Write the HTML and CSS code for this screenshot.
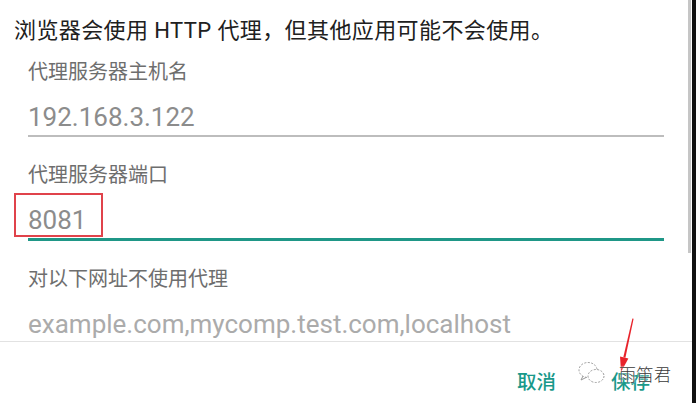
FILE: index.html
```html
<!DOCTYPE html>
<html lang="zh-CN">
<head>
<meta charset="utf-8">
<title>代理设置</title>
<link rel="stylesheet" href="styles.css">
</head>
<body>
<div class="screen">
  <div class="dialog">
    <div class="scroll">
      <p class="intro">浏览器会使用 HTTP 代理，但其他应用可能不会使用。</p>

      <div class="field">
        <div class="field-label">代理服务器主机名</div>
        <div class="field-value">192.168.3.122</div>
        <div class="field-line"></div>
      </div>

      <div class="field">
        <div class="field-label">代理服务器端口</div>
        <div class="field-value port">8081<span class="mark"></span></div>
        <div class="field-line focused"></div>
      </div>

      <div class="field">
        <div class="field-label">对以下网址不使用代理</div>
        <div class="field-value hint">example.com,mycomp.test.com,localhost</div>
      </div>

      <div class="scrollbar"></div>
    </div>

    <div class="actions">
      <span class="btn">取消</span>
      <span class="btn">保存</span>

      <svg class="arrow" width="24" height="60" viewBox="0 0 24 60">
        <polygon points="18.6,3.8 17.4,3.6 8.3,42.2 10.4,42.7" fill="#e8222a"/>
        <polygon points="13.4,43.4 5,41.4 6,57" fill="#e8222a"/>
      </svg>

      <div class="watermark">
        <svg class="wx" width="30" height="28" viewBox="0 0 30 28">
          <ellipse cx="11" cy="11" rx="9" ry="7.5" fill="none" stroke="#9a9a9a" stroke-width="1" stroke-dasharray="2 1.5"/>
          <ellipse cx="19" cy="17" rx="8" ry="6.5" fill="#fff" stroke="#9a9a9a" stroke-width="1" stroke-dasharray="2 1.5"/>
          <path d="M6 17 L4 21 L9 18.5" fill="none" stroke="#9a9a9a" stroke-width="1"/>
        </svg>
        <span class="wm-text">雨笛君</span>
      </div>
    </div>
  </div>
  <div class="edge"></div>
</div>
</body>
</html>
```

FILE: styles.css
```css
* { box-sizing: border-box; }

html, body {
  margin: 0;
  padding: 0;
  background: #fff;
}

body {
  font-family: Roboto, "Noto Sans CJK SC", sans-serif;
  width: 696px;
  height: 403px;
  overflow: hidden;
}

.screen {
  display: flex;
  height: 403px;
}

.dialog {
  flex: 1;
  display: flex;
  flex-direction: column;
  position: relative;
}

.edge {
  width: 4px;
  background: #111;
}

/* scrolling body of the dialog */
.scroll {
  position: relative;
  height: 342px;
  border-bottom: 1px solid #e2e2e2;
  padding: 17px 28px 0 14px;
}

.intro {
  margin: 0;
  font-size: 22px;
  line-height: 28px;
  color: #202020;
  letter-spacing: 0.4px;
}

.field {
  margin-left: 14px;
  margin-top: 15px;
}

.field + .field {
  margin-top: 26px;
}

.field-label {
  font-size: 20px;
  line-height: 24px;
  color: #6e6e6e;
}

.field-value {
  margin-top: 16px;
  font-size: 26px;
  line-height: 34px;
  color: #8c8c8c;
}

.field-value.hint {
  color: #ababab;
}

.port {
  position: relative;
}

/* red frame drawn around the port number */
.mark {
  position: absolute;
  left: -14px;
  top: -10px;
  width: 89px;
  height: 44px;
  border: 2px solid #e0434b;
}

.field-line {
  height: 2px;
  margin-top: 1px;
  background: #bdbdbd;
}

.field-line.focused {
  height: 3px;
  margin-top: 1px;
  background: #1f9787;
}

.scrollbar {
  position: absolute;
  right: 1px;
  top: 0;
  width: 3px;
  height: 253px;
  background: #c6c6c6;
}

.actions {
  position: relative;
  flex: 1;
  display: flex;
  justify-content: flex-end;
  align-items: center;
  gap: 55px;
  padding: 21px 42px 0 0;
}

.btn {
  font-size: 19.5px;
  line-height: 28px;
  color: #19998a;
  font-weight: 500;
}

.arrow {
  position: absolute;
  left: 615px;
  top: -27px;
}

.watermark {
  position: absolute;
  left: 577px;
  top: 17px;
  display: flex;
  align-items: center;
  gap: 12px;
}

.wm-text {
  font-size: 17px;
  font-weight: 300;
  color: #3a3a3a;
  text-shadow: 0 0 2px #fff, 0 0 2px #fff;
  letter-spacing: 0.5px;
}
```
